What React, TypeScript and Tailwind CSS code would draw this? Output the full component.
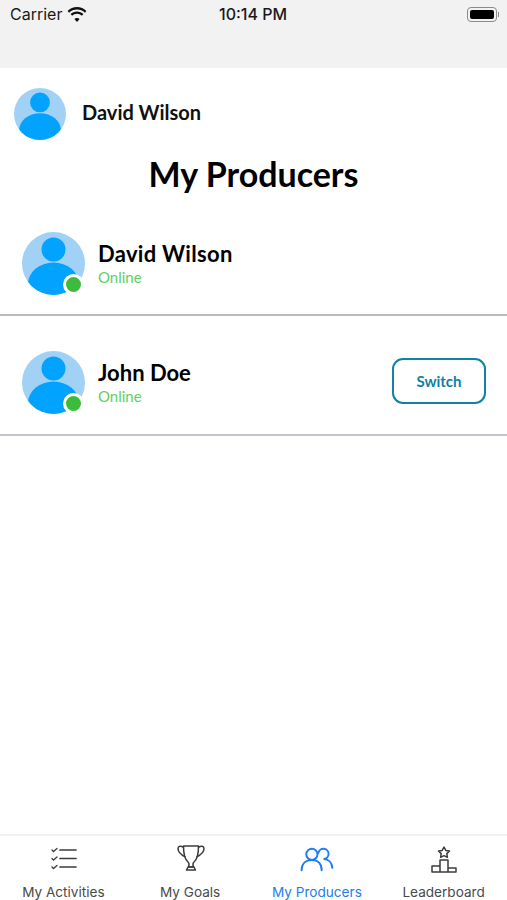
const Avatar = ({ size, online }: { size: 'sm' | 'lg'; online?: boolean }) => (
  <div className={size === 'lg' ? 'relative w-[63px] h-[63px] shrink-0' : 'relative w-[52px] h-[52px] shrink-0'}>
    <svg viewBox="0 0 63 63" className="w-full h-full">
      <defs>
        <clipPath id={`clip-${size}`}>
          <circle cx="31.5" cy="31.5" r="31.5" />
        </clipPath>
      </defs>
      <circle cx="31.5" cy="31.5" r="31.5" fill="#a1d2f6" />
      <g clipPath={`url(#clip-${size})`}>
        <circle cx="31.5" cy="17.5" r="12" fill="#02a2ff" />
        <ellipse cx="31.5" cy="52" rx="25.5" ry="21.5" fill="#02a2ff" />
      </g>
    </svg>
    {online && (
      <span className="absolute right-[1px] bottom-0 w-[21px] h-[21px] rounded-full bg-[#3dbb3d] border-[3px] border-white" />
    )}
  </div>
);

const tabs = [
  { label: 'My Activities', icon: 'list' },
  { label: 'My Goals', icon: 'trophy' },
  { label: 'My Producers', icon: 'people', active: true },
  { label: 'Leaderboard', icon: 'podium' },
];

const TabIcon = ({ name }: { name: string }) => {
  if (name === 'list') {
    return (
      <svg viewBox="0 0 30 30" className="w-[30px] h-[30px] ml-[2px] -mt-[4px]" fill="none" stroke="#3c3c3c" strokeLinecap="round">
        <path d="M3 7l1.500 1.500L8 5.500M3 15.500L4.500 17 8 14M3 24l1.500 1.500L8 22.500" strokeWidth="1.300" />
        <path d="M11 7h16M11 15.500h16M11 24h16" strokeWidth="1.700" />
      </svg>
    );
  }
  if (name === 'trophy') {
    return (
      <svg viewBox="0 0 30 30" className="w-[30px] h-[30px] ml-[2px] -mt-[4px]" fill="none" stroke="#3c3c3c" strokeWidth="1.500" strokeLinejoin="round">
        <path d="M7.500 3h15c0 8-.8 13-4.500 16-1 .8-1.200 3-.6 5h-4.800c.6-2 .4-4.200-.6-5C8.300 16 7.500 11 7.500 3z" />
        <path d="M7.500 4.500C5 2.500 2 3 2 5.500c0 3 3.500 6.500 7.500 8.500M22.500 4.500C25 2.500 28 3 28 5.500c0 3-3.500 6.500-7.500 8.500" />
        <path d="M10.500 27h9l-1.500-3h-6z" />
      </svg>
    );
  }
  if (name === 'people') {
    return (
      <svg viewBox="0 0 36 30" className="w-[34px] h-[28px] -mt-[2px]" fill="none" stroke="#1c7df0" strokeWidth="2.100" strokeLinecap="round">
        <circle cx="12.500" cy="10" r="6" />
        <path d="M1.500 27c0-7 4.500-11 11-11s10.500 4 10.500 11" />
        <path d="M19.500 8.500a5.500 5.500 0 1 1 5.500 6.500c5 0 9 3.500 9.500 9.500" />
      </svg>
    );
  }
  return (
    <svg viewBox="0 0 30 30" className="w-[30px] h-[30px] -mt-[1px]" fill="none" stroke="#3c3c3c" strokeWidth="1.500" strokeLinejoin="round">
      <path d="M15 2l1.800 3.400 3.700.6-2.700 2.600.6 3.700-3.400-1.700-3.400 1.700.6-3.700L9.500 6l3.700-.6z" />
      <path d="M11 15h8v12h-8zM3 21h8v6H3zM19 23h8v4h-8z" />
    </svg>
  );
};

export default function App() {
  return (
    <div className="w-[507px] h-[900px] bg-white flex flex-col overflow-hidden font-['Lato','Liberation_Sans',sans-serif]">
      <div className="h-[68px] bg-[#f2f2f2] pl-[10px] pr-[8px] pt-[3px] shrink-0 font-['Inter',sans-serif] text-[#1a1a1a]">
        <div className="relative flex items-center justify-between h-[22px]">
          <div className="flex items-center gap-[5px]">
            <span className="text-[16px]">Carrier</span>
            <svg viewBox="0 0 20 15" className="w-[20px] h-[15px]" fill="#111">
              <path d="M10 2.500c3 0 5.800 1.200 7.900 3.200l1.500-1.700C16.900 1.500 13.600 0 10 0S3.100 1.500.6 4l1.500 1.700C4.200 3.700 7 2.500 10 2.500z" />
              <path d="M10 6.800c1.900 0 3.600.7 4.900 2l1.500-1.700C14.700 5.400 12.500 4.400 10 4.400s-4.700 1-6.400 2.700l1.500 1.700c1.300-1.300 3-2 4.900-2z" />
              <path d="M10 11c-1 0-2 .4-2.600 1.100L10 15l2.600-2.900C12 11.400 11 11 10 11z" />
            </svg>
          </div>
          <span className="absolute left-[209px] text-[16px] font-medium">10:14 PM</span>
          <div className="flex items-center gap-[1px]">
            <div className="w-[30px] h-[15px] rounded-[4px] border border-[#8a8a8a] p-[2px]">
              <div className="w-full h-full rounded-[2px] bg-black" />
            </div>
            <div className="w-[1.500px] h-[5px] bg-[#8a8a8a]" />
          </div>
        </div>
      </div>

      <div className="flex items-center gap-[16px] pl-[14px] mt-[20px] h-[52px] shrink-0">
        <Avatar size="sm" />
        <span className="text-[20px] leading-[24px] -mt-[4px] font-bold text-[#111]">David Wilson</span>
      </div>

      <h1 className="text-center text-[34px] leading-[40px] font-bold text-black mt-[14px] shrink-0">My Producers</h1>

      <div className="mt-[39px] shrink-0">
        <div className="flex items-center pl-[22px] h-[83px] border-b-2 border-[#b9bcc0]">
          <div className="flex items-center gap-[13px] -mt-[20px]">
            <Avatar size="lg" online />
            <div className="flex flex-col">
              <span className="text-[22px] leading-[26px] tracking-[0.3px] font-bold text-black">David Wilson</span>
              <span className="text-[15px] leading-[20px] text-[#5fcf5f]">Online</span>
            </div>
          </div>
        </div>
        <div className="flex items-center justify-between pl-[22px] pr-[21px] pt-[15px] h-[120px] border-b-2 border-[#c2c4c9]">
          <div className="flex items-center gap-[13px]">
            <Avatar size="lg" online />
            <div className="flex flex-col">
              <span className="text-[22px] leading-[26px] font-bold text-black">John Doe</span>
              <span className="text-[15px] leading-[20px] text-[#5fcf5f]">Online</span>
            </div>
          </div>
          <button className="w-[94px] h-[46px] -mt-[3px] rounded-[11px] border-[2.500px] border-[#0f82a6] text-[15px] font-bold text-[#0f7fa3]">Switch</button>
        </div>
      </div>

      <div className="flex-1" />

      <div className="h-[66px] border-t-2 border-[#f2f2f2] grid grid-cols-4 shrink-0 font-['Inter',sans-serif]">
        {tabs.map((tab) => (
          <div key={tab.label} className="flex flex-col items-center pt-[9px]">
            <div className="h-[30px] flex items-center justify-center">
              <TabIcon name={tab.icon} />
            </div>
            <span className={tab.active ? 'mt-[8px] text-[13.6px] leading-[18px] text-[#1c7df0]' : 'mt-[8px] text-[13.6px] leading-[18px] text-[#4a4a4a]'}>{tab.label}</span>
          </div>
        ))}
      </div>
    </div>
  );
}
